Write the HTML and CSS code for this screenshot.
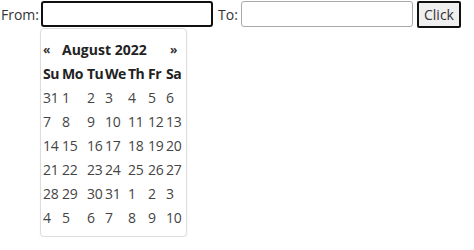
FILE: index.html
```html
<!DOCTYPE html>
<html>
<head>
<meta charset="utf-8">
<link rel="stylesheet" href="styles.css">
</head>
<body>
<div class="page">
  <div class="bar">
    <label class="lbl lbl-from">From:</label>
    <input class="field field-active" type="text">
    <label class="lbl lbl-to">To:</label>
    <input class="field" type="text">
    <button class="btn" type="button">Click</button>
  </div>
  <div class="picker">
    <table class="cal">
      <colgroup>
        <col class="c1"><col class="c2"><col class="c3"><col class="c4"><col class="c5"><col class="c6"><col class="c7">
      </colgroup>
      <tbody>
        <tr class="head-row">
          <td class="nav">«</td>
          <td class="month" colspan="5">August 2022</td>
          <td class="nav nav-next">»</td>
        </tr>
        <tr class="dow-row">
          <th>Su</th><th>Mo</th><th>Tu</th><th>We</th><th>Th</th><th>Fr</th><th>Sa</th>
        </tr>
        <tr><td>31</td><td>1</td><td>2</td><td>3</td><td>4</td><td>5</td><td>6</td></tr>
        <tr><td>7</td><td>8</td><td>9</td><td>10</td><td>11</td><td>12</td><td>13</td></tr>
        <tr><td>14</td><td>15</td><td>16</td><td>17</td><td>18</td><td>19</td><td>20</td></tr>
        <tr><td>21</td><td>22</td><td>23</td><td>24</td><td>25</td><td>26</td><td>27</td></tr>
        <tr><td>28</td><td>29</td><td>30</td><td>31</td><td>1</td><td>2</td><td>3</td></tr>
        <tr><td>4</td><td>5</td><td>6</td><td>7</td><td>8</td><td>9</td><td>10</td></tr>
      </tbody>
    </table>
  </div>
</div>
</body>
</html>
```
FILE: styles.css
```css
html, body {
  margin: 0;
  padding: 0;
  background: #ffffff;
}
body {
  font-family: "Open Sans", "Noto Sans", sans-serif;
  font-size: 14px;
  color: #333333;
}
.page {
  display: flex;
  flex-direction: column;
  align-items: flex-start;
}
.bar {
  display: flex;
  align-items: center;
  padding-top: 1px;
  height: 26px;
}
.lbl {
  color: #333333;
  font-size: 14px;
}
.lbl-from {
  margin-left: 1px;
  width: 40px;
}
.lbl-to {
  margin-left: 5px;
  width: 23px;
}
.field {
  box-sizing: border-box;
  width: 172px;
  height: 26px;
  margin: 0;
  border: 1px solid #a9a9a9;
  border-radius: 3px;
  background: #ffffff;
  font-family: inherit;
  font-size: 14px;
  padding: 0 4px;
  display: block;
}
.field-active {
  border: 2px solid #101010;
}
.btn {
  box-sizing: border-box;
  margin-left: 4px;
  width: 44px;
  height: 27px;
  margin-top: 1px;
  border: 2px solid #111111;
  border-radius: 2px;
  background: #efefef;
  color: #333333;
  font-family: inherit;
  font-size: 14px;
  padding: 0;
}
.picker {
  margin-left: 40px;
  margin-top: 1px;
  box-sizing: border-box;
  width: 147px;
  height: 209px;
  border: 1px solid #dddddd;
  border-radius: 4px;
  background: #ffffff;
  box-shadow: 0 1px 2px rgba(0, 0, 0, 0.06);
  padding: 8px 2px 0 2px;
}
.cal {
  border-collapse: collapse;
  table-layout: fixed;
  width: 141px;
}
.c1 { width: 19px; }
.c2 { width: 25px; }
.c3 { width: 18px; }
.c4 { width: 23px; }
.c5 { width: 20px; }
.c6 { width: 18px; }
.c7 { width: 18px; }
.cal td, .cal th {
  padding: 0;
  height: 24px;
  text-align: left;
  white-space: nowrap;
  overflow: visible;
  color: #444444;
  font-weight: normal;
  letter-spacing: -0.3px;
}
.cal th {
  font-weight: bold;
  color: #222222;
  letter-spacing: -0.5px;
}
.cal .month {
  font-weight: bold;
  color: #222222;
  letter-spacing: 0;
}
.cal .nav {
  font-weight: bold;
  color: #333333;
  font-size: 12px;
}
.cal .nav-next {
  padding-left: 4px;
}
```
